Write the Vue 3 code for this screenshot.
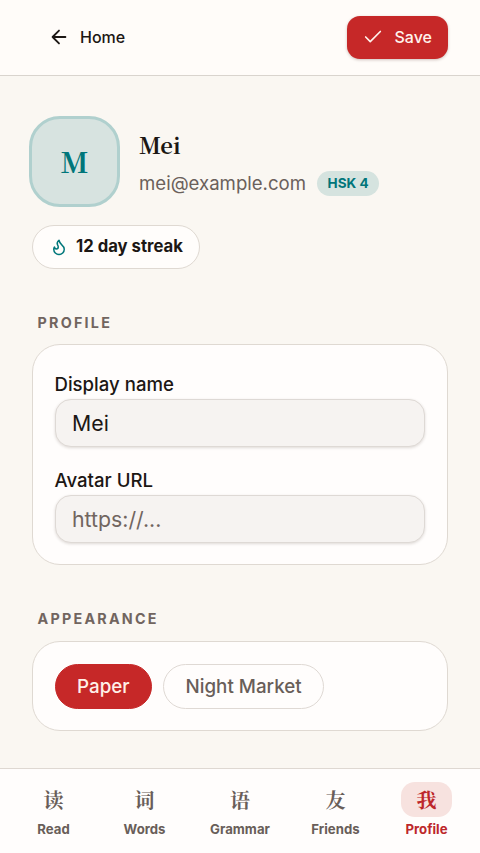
<script setup>
import { ref } from 'vue'

const displayName = ref('Mei')
const avatarUrl = ref('')
const theme = ref('Paper')
const themes = ['Paper', 'Night Market']
const tabs = [
  { glyph: '读', label: 'Read' },
  { glyph: '词', label: 'Words' },
  { glyph: '语', label: 'Grammar' },
  { glyph: '友', label: 'Friends' },
  { glyph: '我', label: 'Profile', active: true },
]
</script>

<template>
  <div class="screen">
    <header class="topbar">
      <button class="home">
        <svg class="icon" viewBox="0 0 24 24"><path d="m12 19-7-7 7-7M19 12H5" /></svg>
        <span>Home</span>
      </button>
      <button class="save">
        <svg class="icon check" viewBox="0 0 24 24"><path d="M20 6 9 17l-5-5" /></svg>
        <span>Save</span>
      </button>
    </header>

    <main class="content">
      <section class="identity">
        <div class="avatar">M</div>
        <div class="who">
          <h1>Mei</h1>
          <div class="contact">
            <span class="email">mei@example.com</span>
            <span class="level">HSK 4</span>
          </div>
        </div>
      </section>

      <div class="streak">
        <svg class="flame" viewBox="0 0 24 24">
          <path d="M8.5 14.5A2.5 2.5 0 0 0 11 12c0-1.38-.5-2-1-3-1.072-2.143-.224-4.054 2-6 .5 2.5 2 4.9 4 6.5 2 1.6 3 3.5 3 5.5a7 7 0 1 1-14 0c0-1.153.433-2.294 1-3a2.5 2.5 0 0 0 2.5 2.5z" />
        </svg>
        <span>12 day streak</span>
      </div>

      <h2>PROFILE</h2>
      <section class="card form">
        <label class="field">
          <span>Display name</span>
          <input v-model="displayName" type="text" />
        </label>
        <label class="field">
          <span>Avatar URL</span>
          <input v-model="avatarUrl" type="text" placeholder="https://..." />
        </label>
      </section>

      <h2 class="second">APPEARANCE</h2>
      <section class="card themes">
        <button
          v-for="t in themes"
          :key="t"
          class="theme"
          :class="{ selected: t === theme }"
          @click="theme = t"
        >{{ t }}</button>
      </section>
    </main>

    <nav class="tabs">
      <a v-for="tab in tabs" :key="tab.label" class="tab" :class="{ active: tab.active }">
        <span class="glyph">{{ tab.glyph }}</span>
        <span class="label">{{ tab.label }}</span>
      </a>
    </nav>
  </div>
</template>

<style>
body {
  background: #faf7f2;
}
</style>

<style scoped>
.screen {
  display: flex;
  flex-direction: column;
  height: 853px;
  overflow: hidden;
  background: #faf7f2;
  color: #1c1714;
  font-family: Inter, "Liberation Sans", sans-serif;
}
.screen * {
  box-sizing: border-box;
}
button {
  margin: 0;
  border: 0;
  background: none;
  color: inherit;
  font: inherit;
}
.topbar {
  display: flex;
  flex: none;
  justify-content: space-between;
  align-items: flex-start;
  height: 76px;
  padding: 16px 32px 0 47.5px;
  border-bottom: 1.5px solid #d9d4ce;
  background: #fffcf9;
}
.icon {
  width: 22px;
  height: 22px;
  fill: none;
  stroke: currentColor;
  stroke-width: 2;
  stroke-linecap: round;
  stroke-linejoin: round;
}
.home,
.save {
  display: flex;
  align-items: center;
  height: 42px;
  font-size: 16px;
  font-weight: 500;
}
.home {
  gap: 10.5px;
  padding: 0;
}
.save {
  gap: 10.5px;
  width: 101px;
  height: 43px;
  padding: 0 0 1px 15px;
  border-radius: 13px;
  background: #c62828;
  color: #fff3ec;
  box-shadow: 0 1px 3px rgba(60, 20, 10, 0.25);
}
.check {
  stroke-width: 1.8;
}
.content {
  flex: 1;
  padding: 40px 32px 0;
}
.identity {
  display: flex;
  margin-left: -3px;
}
.avatar {
  display: flex;
  align-items: center;
  justify-content: center;
  width: 91px;
  height: 91px;
  padding-bottom: 2px;
  border: 3px solid #b0d0ce;
  border-radius: 31px;
  background: #d7e3e0;
  color: #00767a;
  font: 700 28px/1 "Noto Serif CJK SC", "Source Serif 4", "Liberation Serif", serif;
}
.who {
  padding: 14px 0 0 19px;
}
h1 {
  margin: 0;
  font: 700 22px/30px "Noto Serif CJK SC", "Source Serif 4", "Liberation Serif", serif;
}
.contact {
  display: flex;
  align-items: center;
  gap: 11px;
  height: 26px;
  margin-top: 10px;
}
.email {
  color: #6a605b;
  font-size: 18.6px;
}
.level {
  width: 62px;
  height: 25px;
  border-radius: 13px;
  background: #d5e3df;
  color: #00757a;
  font-size: 13.5px;
  font-weight: 700;
  line-height: 25px;
  text-align: center;
}
.streak {
  display: flex;
  align-items: center;
  gap: 8px;
  width: 168px;
  height: 44px;
  margin-top: 18px;
  padding-left: 17px;
  padding-bottom: 2px;
  border: 1.5px solid #dfd9d2;
  border-radius: 22px;
  background: #fffdfb;
  font-size: 16.7px;
  font-weight: 650;
}
.flame {
  width: 18px;
  height: 18px;
  margin-top: 2px;
  fill: none;
  stroke: #00777a;
  stroke-width: 2;
  stroke-linecap: round;
  stroke-linejoin: round;
}
h2 {
  margin: 44px 0 11px 5.5px;
  color: #71655f;
  font-size: 14.3px;
  font-weight: 700;
  letter-spacing: 2.25px;
  line-height: 20px;
}
h2.second {
  margin-top: 44px;
  margin-bottom: 12px;
}
.card {
  border: 1.5px solid #dfd9d2;
  border-radius: 28px;
  background: #fffdfc;
}
.form {
  display: flex;
  flex-direction: column;
  gap: 20px;
  height: 221px;
  padding: 27px 22px 0 21.5px;
}
.field {
  display: flex;
  flex-direction: column;
  height: 76px;
  font-size: 18.6px;
  font-weight: 500;
  line-height: 24px;
}
.field input {
  width: 100%;
  height: 48px;
  margin-top: 3px;
  padding: 0 16px 1px 16.5px;
  border: 1.5px solid #ded9d5;
  border-radius: 16px;
  outline: 0;
  background: #f6f3f1;
  color: #1c1714;
  font: 400 21.3px Inter, sans-serif;
  box-shadow: 0 1px 3px rgba(50, 30, 20, 0.16);
}
.field input::placeholder {
  color: #71655f;
  opacity: 1;
}
.themes {
  display: flex;
  gap: 11px;
  height: 90px;
  padding: 22px 21.5px 0;
}
.theme {
  height: 45px;
  padding: 0 21.5px;
  border: 1.5px solid #dfd9d4;
  border-radius: 23px;
  color: #685e59;
  font-size: 18.8px;
  font-weight: 500;
}
.theme.selected {
  border-color: #c62828;
  background: #c62828;
  color: #fff0e9;
}
.tabs {
  display: flex;
  flex: none;
  justify-content: space-around;
  height: 85px;
  padding: 13px 8px 0;
  border-top: 1.5px solid #ded8d2;
  background: #fffdfc;
}
.tab {
  display: flex;
  flex-direction: column;
  align-items: center;
  color: #695e59;
}
.glyph {
  width: 51px;
  height: 35px;
  border-radius: 14px;
  font: 700 20px/36px "Noto Serif CJK SC", "Noto Sans CJK SC", serif;
  text-align: center;
}
.label {
  margin-top: 3px;
  font-size: 13.2px;
  font-weight: 700;
  line-height: 18px;
}
.tab.active {
  color: #bd272b;
}
.tab.active .glyph {
  background: #f7e2df;
}
</style>
